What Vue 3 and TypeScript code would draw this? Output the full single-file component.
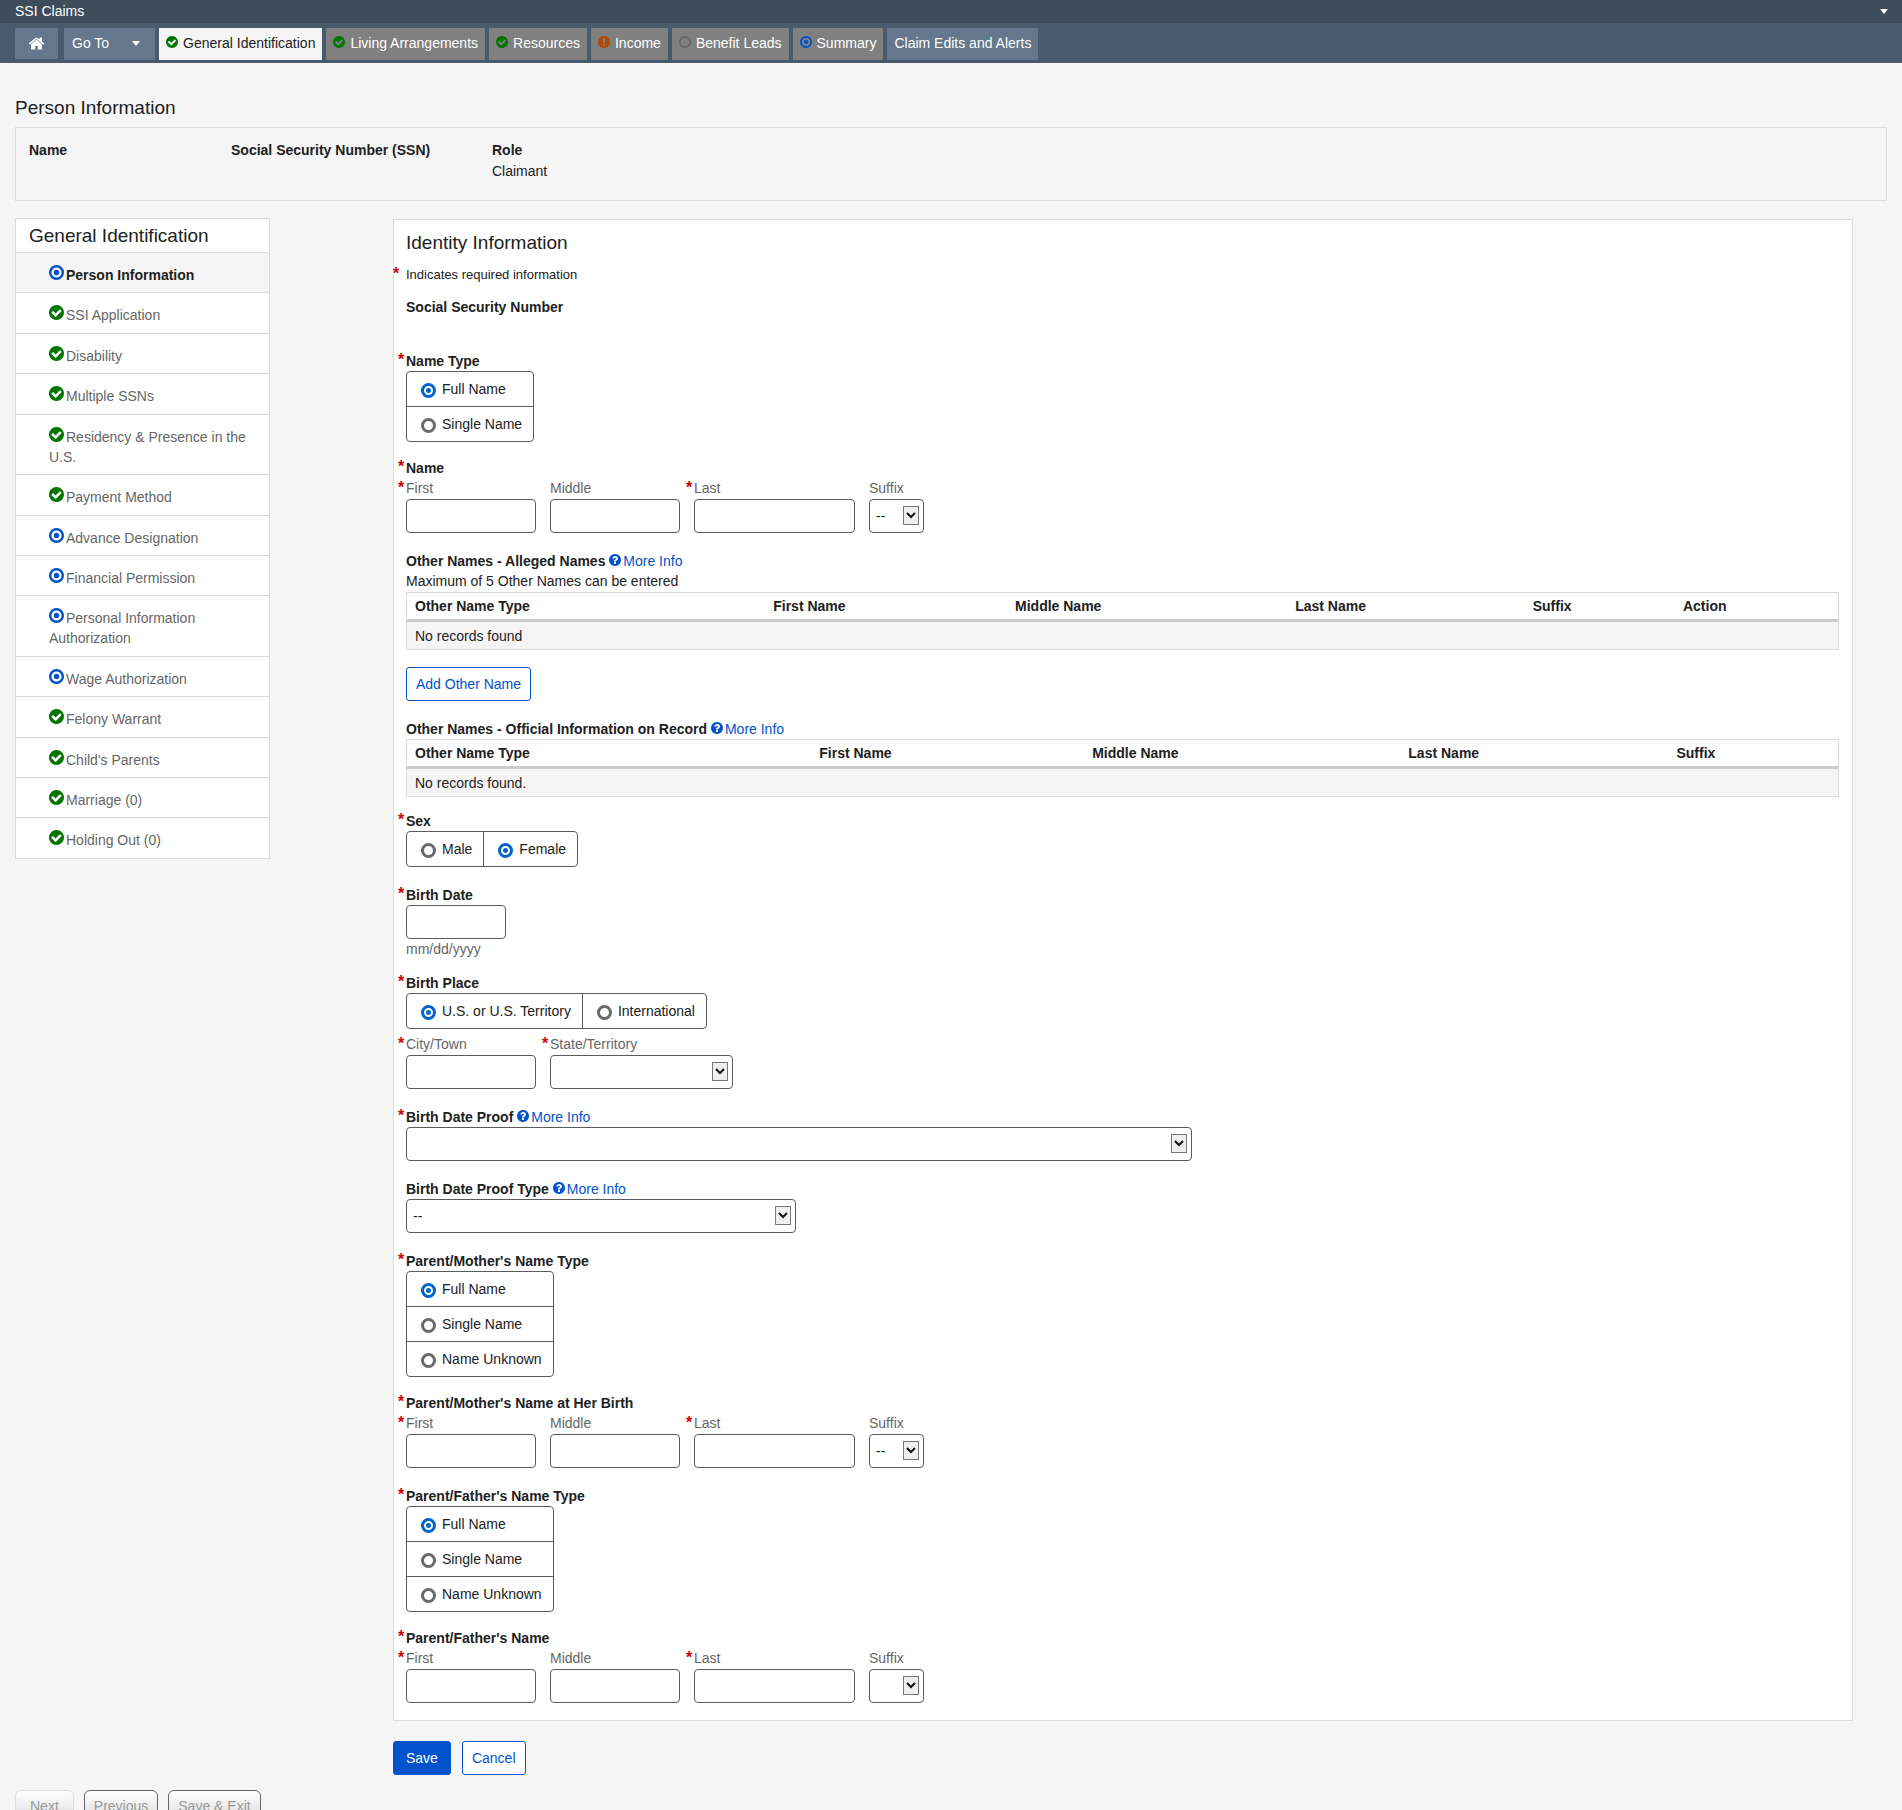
<script setup lang="ts">
import { h, reactive, type FunctionalComponent } from 'vue'

type Status = 'done' | 'current' | 'error' | 'empty' | 'help'

const CIRCLE =
  'q0 209-103 385.5t-279.5 279.5-385.5 103-385.5-103-279.5-279.5-103-385.5 103-385.5 279.5-279.5 385.5-103 385.5 103 279.5 279.5 103 385.5z'

const shapes: Record<Status, { color: string; d: string }> = {
  done: {
    color: '#007600',
    d:
      'M1412 734q0-28-18-46l-91-90q-19-19-45-19t-45 19l-408 407-226-226q-19-19-45-19t-45 19l-91 90q-18 18-18 46 0 27 18 45l362 362q19 19 45 19 27 0 46-19l543-543q18-18 18-45zm252 162' +
      CIRCLE,
  },
  current: {
    color: '#0053cc',
    d:
      'M896 620a276 276 0 1 0 0 552a276 276 0 1 0 0-552zM896 372a524 524 0 1 0 0 1048a524 524 0 1 0 0-1048zM1664 896' +
      CIRCLE,
  },
  error: {
    color: '#b34700',
    d:
      'M1024 1375v-190q0-14-9-23.500t-22-9.500h-192q-13 0-23 10t-10 23v190q0 13 10 23t23 10h192q13 0 22-9.500t9-23.500zM1022 1031l18-621q0-12-10-18-10-8-24-8h-220q-14 0-24 8-10 6-10 18l17 621q0 10 10 17.500t24 7.500h185q14 0 23.500-7.500t10.500-17.500zM1664 896' +
      CIRCLE,
  },
  empty: {
    color: '#666666',
    d: 'M896 352a544 544 0 1 0 0 1088a544 544 0 1 0 0-1088zM1664 896' + CIRCLE,
  },
  help: {
    color: '#0053cc',
    d:
      'M1024 1376v-192q0-14-9-23t-23-9h-192q-14 0-23 9t-9 23v192q0 14 9 23t23 9h192q14 0 23-9t9-23zm256-672q0-88-55.500-163t-138.500-116-170-41q-243 0-371 213-15 24 8 42l132 100q7 6 19 6 16 0 25-12 53-68 86-92 34-24 86-24 48 0 85.500 26t37.500 59q0 38-20 61t-68 45q-63 28-115.500 86.500t-52.500 125.500v36q0 14 9 23t23 9h192q14 0 23-9t9-23q0-19 21.500-49.500t54.500-49.500q32-18 49-28.500t46-35 44.500-48 28-60.500 12.500-81zm384 192' +
      CIRCLE,
  },
}

const StatusIcon: FunctionalComponent<{ status: Status; size: number }> = (props) =>
  h(
    'svg',
    { width: props.size, height: props.size, viewBox: '128 128 1536 1536', 'aria-hidden': 'true' },
    [
      h('path', {
        d: shapes[props.status].d,
        fill: shapes[props.status].color,
        // the ring shapes nest a dot inside a hole
        'fill-rule': 'evenodd',
      }),
    ],
  )
StatusIcon.props = ['status', 'size']

const RadioGroup: FunctionalComponent<{
  name: string
  legend: string
  options: string[]
  vertical?: boolean
}> = (props) =>
  h('fieldset', { class: 'field' }, [
    h('legend', { class: 'label required' }, props.legend),
    h(
      'div',
      { class: ['radios', props.vertical ? 'radios-vertical' : ''] },
      props.options.map((option) =>
        h('label', { class: 'radio' }, [
          h('input', {
            type: 'radio',
            name: props.name,
            value: option,
            checked: choices[props.name] === option,
            onChange: () => (choices[props.name] = option),
          }),
          h('span', option),
        ]),
      ),
    ),
  ])
RadioGroup.props = { name: String, legend: String, options: Array, vertical: Boolean }

const SelectBox: FunctionalComponent<{ id: string; text: string; size: string }> = (props) =>
  h('div', { class: ['select', 'w-' + props.size] }, [
    h('select', { id: props.id }, [h('option', props.text)]),
    h('svg', { width: 16, height: 19, viewBox: '0 0 16 19', 'aria-hidden': 'true' }, [
      h('rect', { x: 0.5, y: 0.5, width: 15, height: 18, fill: '#efefef', stroke: '#767676' }),
      h('path', { d: 'M4 7l4 4 4-4', fill: 'none', stroke: '#111', 'stroke-width': 2 }),
    ]),
  ])
SelectBox.props = ['id', 'text', 'size']

const NameFields: FunctionalComponent<{ prefix: string; legend: string; suffix: string }> = (props) =>
  h('fieldset', { class: 'field name-fields' }, [
    h('legend', { class: 'label required' }, props.legend),
    h('div', { class: 'row' }, [
      ...[
        { text: 'First', size: 'medium', required: true },
        { text: 'Middle', size: 'medium', required: false },
        { text: 'Last', size: 'wide', required: true },
      ].map((part) =>
        h('div', [
          h(
            'label',
            { class: ['sublabel', part.required ? 'required' : ''], for: props.prefix + part.text },
            part.text,
          ),
          h('input', { type: 'text', id: props.prefix + part.text, class: 'w-' + part.size }),
        ]),
      ),
      h('div', [
        h('label', { class: 'sublabel', for: props.prefix + 'Suffix' }, 'Suffix'),
        h(SelectBox, { id: props.prefix + 'Suffix', text: props.suffix, size: 'suffix' }),
      ]),
    ]),
  ])
NameFields.props = ['prefix', 'legend', 'suffix']

const choices = reactive<Record<string, string>>({
  nameType: 'Full Name',
  sex: 'Female',
  birthPlace: 'U.S. or U.S. Territory',
  motherType: 'Full Name',
  fatherType: 'Full Name',
})

const tabs: { text: string; status: Status; active?: boolean }[] = [
  { text: 'General Identification', status: 'done', active: true },
  { text: 'Living Arrangements', status: 'done' },
  { text: 'Resources', status: 'done' },
  { text: 'Income', status: 'error' },
  { text: 'Benefit Leads', status: 'empty' },
  { text: 'Summary', status: 'current' },
]

const sections: { text: string; status: Status }[] = [
  { text: 'Person Information', status: 'current' },
  { text: 'SSI Application', status: 'done' },
  { text: 'Disability', status: 'done' },
  { text: 'Multiple SSNs', status: 'done' },
  { text: 'Residency & Presence in the U.S.', status: 'done' },
  { text: 'Payment Method', status: 'done' },
  { text: 'Advance Designation', status: 'current' },
  { text: 'Financial Permission', status: 'current' },
  { text: 'Personal Information Authorization', status: 'current' },
  { text: 'Wage Authorization', status: 'current' },
  { text: 'Felony Warrant', status: 'done' },
  { text: "Child's Parents", status: 'done' },
  { text: 'Marriage (0)', status: 'done' },
  { text: 'Holding Out (0)', status: 'done' },
]

const parentTypes = ['Full Name', 'Single Name', 'Name Unknown']
</script>

<template>
  <div class="page">
    <header>
      <div class="titlebar">
        <span>SSI Claims</span>
        <button type="button" class="menu" aria-label="Menu"><i class="caret"></i></button>
      </div>
      <nav class="tabs">
        <a href="#" class="tab home" aria-label="Home">
          <svg width="17" height="17" viewBox="0 0 1792 1792">
            <path
              fill="#fff"
              d="M1472 992v480q0 26-19 45t-45 19h-384v-384h-256v384h-384q-26 0-45-19t-19-45v-480q0-1 .5-3t.5-3l575-474 575 474q1 2 1 6zm223-69l-62 74q-8 9-21 11h-3q-13 0-21-7l-692-577-692 577q-12 8-24 7-13-2-21-11l-62-74q-8-10-7-23.500t11-21.500l719-599q32-26 76-26t76 26l244 204v-195q0-14 9-23t23-9h192q14 0 23 9t9 23v408l219 182q10 8 11 21.500t-7 23.500z"
            />
          </svg>
        </a>
        <button type="button" class="tab goto">Go To <i class="caret"></i></button>
        <a
          v-for="tab in tabs"
          :key="tab.text"
          href="#"
          class="tab step"
          :class="{ active: tab.active }"
        >
          <StatusIcon :status="tab.status" :size="12" />{{ tab.text }}
        </a>
        <a href="#" class="tab">Claim Edits and Alerts</a>
      </nav>
    </header>

    <h1>Person Information</h1>
    <dl class="person">
      <div class="person-name"><dt>Name</dt><dd></dd></div>
      <div class="person-ssn"><dt>Social Security Number (SSN)</dt><dd></dd></div>
      <div><dt>Role</dt><dd>Claimant</dd></div>
    </dl>

    <div class="columns">
      <nav class="sidebar">
        <h2>General Identification</h2>
        <ul>
          <li v-for="(section, i) in sections" :key="section.text" :class="{ active: i === 0 }">
            <a href="#"><StatusIcon :status="section.status" :size="15" />{{ section.text }}</a>
          </li>
        </ul>
      </nav>

      <main>
        <form @submit.prevent>
          <div class="panel">
            <h2>Identity Information</h2>
            <p class="note required">Indicates required information</p>
            <p class="label ssn">Social Security Number</p>

            <RadioGroup
              name="nameType"
              legend="Name Type"
              :options="['Full Name', 'Single Name']"
              vertical
            />
            <NameFields prefix="name" legend="Name" suffix="--" />

            <section class="field">
              <div class="label">
                Other Names - Alleged Names
                <a href="#"><StatusIcon status="help" :size="12" />More Info</a>
              </div>
              <p class="hint-dark">Maximum of 5 Other Names can be entered</p>
              <table>
                <thead>
                  <tr>
                    <th>Other Name Type</th>
                    <th>First Name</th>
                    <th>Middle Name</th>
                    <th>Last Name</th>
                    <th>Suffix</th>
                    <th>Action</th>
                  </tr>
                </thead>
                <tbody>
                  <tr><td colspan="6">No records found</td></tr>
                </tbody>
              </table>
              <button type="button" class="btn add">Add Other Name</button>
            </section>

            <section class="field">
              <div class="label">
                Other Names - Official Information on Record
                <a href="#"><StatusIcon status="help" :size="12" />More Info</a>
              </div>
              <table>
                <thead>
                  <tr>
                    <th>Other Name Type</th>
                    <th>First Name</th>
                    <th>Middle Name</th>
                    <th>Last Name</th>
                    <th>Suffix</th>
                  </tr>
                </thead>
                <tbody>
                  <tr><td colspan="5">No records found.</td></tr>
                </tbody>
              </table>
            </section>

            <RadioGroup class="near" name="sex" legend="Sex" :options="['Male', 'Female']" />

            <div class="field">
              <label class="label required" for="birthDate">Birth Date</label>
              <input id="birthDate" type="text" class="w-date" />
              <p class="hint">mm/dd/yyyy</p>
            </div>

            <RadioGroup
              class="near"
              name="birthPlace"
              legend="Birth Place"
              :options="['U.S. or U.S. Territory', 'International']"
            />
            <div class="row place">
              <div>
                <label class="sublabel required" for="city">City/Town</label>
                <input id="city" type="text" class="w-medium" />
              </div>
              <div>
                <label class="sublabel required" for="state">State/Territory</label>
                <SelectBox id="state" text="" size="state" />
              </div>
            </div>

            <div class="field">
              <div class="label required">
                <label for="proof">Birth Date Proof</label>&nbsp;<a href="#"
                  ><StatusIcon status="help" :size="12" />More Info</a
                >
              </div>
              <SelectBox id="proof" text="" size="proof" />
            </div>

            <div class="field">
              <div class="label">
                <label for="proofType">Birth Date Proof Type</label>&nbsp;<a href="#"
                  ><StatusIcon status="help" :size="12" />More Info</a
                >
              </div>
              <SelectBox id="proofType" text="--" size="prooftype" />
            </div>

            <RadioGroup
              name="motherType"
              legend="Parent/Mother's Name Type"
              :options="parentTypes"
              vertical
            />
            <NameFields prefix="mother" legend="Parent/Mother's Name at Her Birth" suffix="--" />
            <RadioGroup
              name="fatherType"
              legend="Parent/Father's Name Type"
              :options="parentTypes"
              vertical
            />
            <NameFields prefix="father" legend="Parent/Father's Name" suffix="" />
          </div>

          <div class="actions">
            <button type="submit" class="btn primary">Save</button>
            <button type="button" class="btn">Cancel</button>
          </div>
        </form>
      </main>
    </div>

    <footer>
      <button type="button" class="page-btn plain" disabled>Next</button>
      <button type="button" class="page-btn" disabled>Previous</button>
      <button type="button" class="page-btn" disabled>Save &amp; Exit</button>
    </footer>
  </div>
</template>

<style>
body {
  margin: 0;
  background: #f5f5f5;
}
</style>

<style scoped>
.page {
  height: 100vh;
  overflow: hidden;
  background: #f5f5f5;
  color: #212121;
  font: 14px/20px 'Liberation Sans', Arial, sans-serif;
}
.page :deep(*) {
  box-sizing: border-box;
}
h1,
h2,
p,
dl,
dd,
ul {
  margin: 0;
  padding: 0;
}
a {
  color: #0053cc;
  text-decoration: none;
}
button {
  font: inherit;
}

/* header */
.titlebar {
  display: flex;
  justify-content: space-between;
  height: 23px;
  padding: 0 14px 0 15px;
  background: #3e4d5c;
  color: #fff;
  line-height: 22px;
}
.menu {
  display: flex;
  align-items: center;
  padding: 0;
  border: 0;
  background: none;
}
.caret {
  border: 4px solid transparent;
  border-top: 5px solid #fff;
  border-bottom: 0;
}
.tabs {
  display: flex;
  gap: 4px;
  padding: 5px 15px 3px;
  background: #485a6b;
}
.tab {
  display: flex;
  align-items: center;
  height: 32px;
  padding: 0 7px 2px;
  border: 0;
  background: #64778d;
  color: #fff;
}
.home {
  height: 31px;
  margin-right: 2px;
  padding: 0 13px;
}
.goto {
  gap: 23px;
  padding: 0 15px 2px 8px;
}
.step {
  gap: 5px;
  background: #808080;
}
.step :deep(svg) {
  margin-bottom: 2px;
}
.step.active {
  background: #f5f5f5;
  color: #212121;
}

/* person summary */
h1,
h2 {
  font-size: 19px;
  font-weight: 400;
  line-height: 22px;
}
h1 {
  margin: 34px 15px 8px;
}
.person {
  display: flex;
  min-height: 74px;
  margin: 0 15px;
  padding: 12px 13px;
  border: 1px solid #dcdcdc;
}
.person dt {
  font-weight: 700;
}
.person dt,
.person dd {
  line-height: 21px;
}
.person-name {
  width: 202px;
}
.person-ssn {
  width: 261px;
}

/* columns */
.columns {
  display: flex;
  align-items: flex-start;
  gap: 123px;
  margin: 17px 49px 0 15px;
}
.sidebar {
  flex: none;
  width: 255px;
  border: 1px solid #dcdcdc;
  background: #fff;
}
.sidebar h2 {
  padding: 6px 13px 5px;
}
.sidebar ul {
  display: flex;
  flex-direction: column;
  min-height: 606px;
  list-style: none;
}
.sidebar li {
  flex: 1 0 auto;
  padding: 12px 16px 7px 33px;
  border-top: 1px solid #dcdcdc;
}
.sidebar a {
  color: #666;
}
.sidebar :deep(svg) {
  margin-right: 2px;
  vertical-align: 0;
}
.sidebar .active {
  background: #f5f5f5;
}
.sidebar .active a {
  color: #212121;
  font-weight: 700;
}
main {
  flex: 1;
  min-width: 0;
}
.panel {
  margin-top: 1px;
  padding: 12px 13px 17px 12px;
  border: 1px solid #dcdcdc;
  background: #fff;
}

/* fields */
.page :deep(.required) {
  position: relative;
}
.page :deep(.required)::before {
  content: '*';
  position: absolute;
  top: -1px;
  left: -8px;
  color: #c00;
  font-size: 16px;
  font-weight: 700;
}
.page :deep(.note.required)::before {
  left: -13px;
}
.note {
  margin-top: 11px;
  font-size: 13px;
}
.ssn {
  margin: 12px 0 34px;
}
.page :deep(.field) {
  min-width: 0;
  margin: 18px 0 0;
  padding: 0;
  border: 0;
}
.page :deep(.field.near) {
  margin-top: 14px;
}
.page :deep(.field.name-fields) {
  margin-top: 16px;
}
.page :deep(.label) {
  display: block;
  padding: 0;
  font-weight: 700;
  line-height: 20px;
}
.label a {
  font-weight: 400;
}
.label :deep(svg) {
  margin-right: 2px;
  vertical-align: 0;
}
.page :deep(.sublabel) {
  display: block;
  color: #666;
  line-height: 21px;
}
.hint {
  color: #666;
}
.hint-dark {
  line-height: 21px;
}
.page :deep(.row) {
  display: flex;
  gap: 14px;
}
.place {
  margin-top: 5px;
}
.page :deep(input[type='text']),
.page :deep(select) {
  display: block;
  height: 34px;
  padding: 0 6px;
  border: 1px solid #5b5b5b;
  border-radius: 4px;
  background: #fff;
  color: #212121;
  font: inherit;
}
.page :deep(select) {
  width: 100%;
  appearance: none;
}
.page :deep(.select) {
  position: relative;
}
.page :deep(.select svg) {
  position: absolute;
  top: 7px;
  right: 5px;
  pointer-events: none;
}
.page :deep(.w-medium) {
  width: 130px;
}
.page :deep(.w-wide) {
  width: 161px;
}
.page :deep(.w-suffix) {
  width: 55px;
}
.page :deep(.w-date) {
  width: 100px;
}
.page :deep(.w-state) {
  width: 183px;
}
.page :deep(.w-proof) {
  width: 786px;
}
.page :deep(.w-prooftype) {
  width: 390px;
}

/* radios */
.page :deep(.radios) {
  display: inline-flex;
  vertical-align: top;
  border: 1px solid #5b5b5b;
  border-radius: 4px;
}
.page :deep(.radios-vertical) {
  flex-direction: column;
}
.page :deep(.radio) {
  display: flex;
  align-items: center;
  gap: 6px;
  height: 34px;
  padding: 0 11px 0 14px;
}
.page :deep(.radio + .radio) {
  border-left: 1px solid #5b5b5b;
}
.page :deep(.radios-vertical .radio + .radio) {
  height: 35px;
  border-top: 1px solid #5b5b5b;
  border-left: 0;
}
.page :deep(.radio input) {
  appearance: none;
  width: 15px;
  height: 15px;
  margin: 2px 0 0;
  border: 3px solid #6b6b6b;
  border-radius: 50%;
  background: #fff;
}
.page :deep(.radio input:checked) {
  border-color: #0066cc;
  background: radial-gradient(circle, #0066cc 2px, #fff 3px);
}

/* tables */
table {
  width: 100%;
  border: 1px solid #dcdcdc;
  border-spacing: 0;
}
th,
td {
  padding: 3px 8px;
  text-align: left;
}
th {
  border-bottom: 3px solid #ccc;
}
td {
  padding: 4px 8px 3px;
  background: #f5f5f5;
}

/* buttons */
.btn {
  height: 34px;
  padding: 0 9px;
  border: 1px solid #0053cc;
  border-radius: 3px;
  background: #fff;
  color: #0053cc;
}
.primary {
  padding: 0 12px;
  background: #0053cc;
  color: #fff;
}
.add {
  display: block;
  margin-top: 17px;
}
.actions {
  display: flex;
  gap: 11px;
  margin-top: 20px;
}
footer {
  display: flex;
  gap: 10px;
  margin: 15px 15px 0;
}
.page-btn {
  height: 32px;
  padding: 0 9px;
  border: 1px solid #666;
  border-radius: 6px;
  background: linear-gradient(#fff, #dcdcdc);
  color: #999;
}
.page-btn.plain {
  padding: 0 14px;
  border-color: #dcdfe6;
}
</style>
